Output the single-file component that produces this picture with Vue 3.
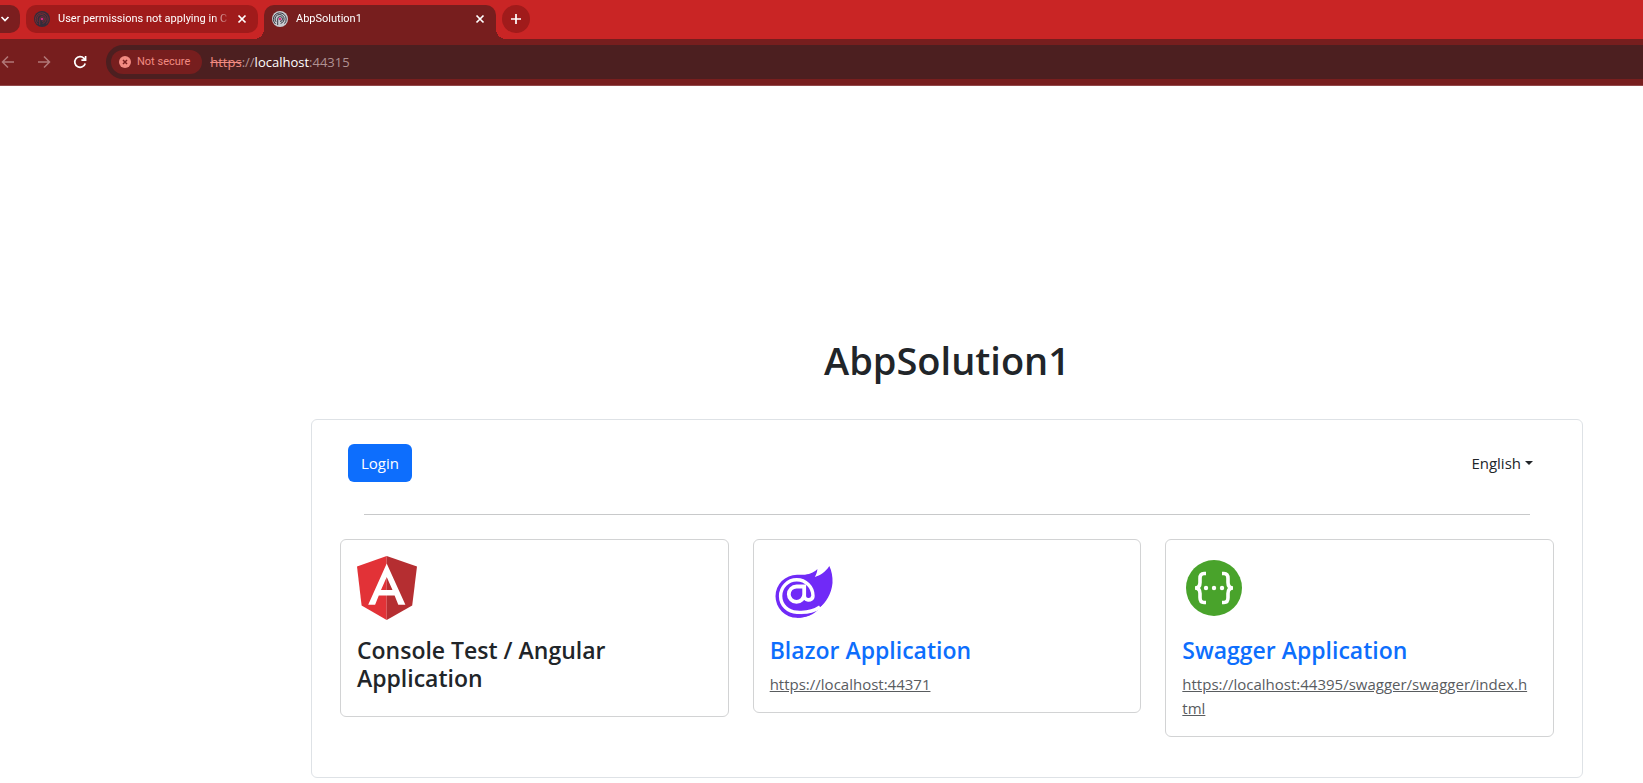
<template>
  <div class="browser">
    <header>
      <div class="tab-strip">
        <button type="button" class="tab-search" aria-label="Search tabs">
          <svg width="10" height="10" viewBox="0 0 10 10"><path d="M1.5 3 5 6.5 8.5 3" /></svg>
        </button>
        <div v-for="tab in tabs" :key="tab.title" class="tab" :class="{ active: tab.active }">
          <svg class="favicon" :class="{ light: tab.active }" viewBox="0 0 16 16">
            <circle class="disc" cx="8" cy="8" r="8" />
            <path class="rings" d="M3.5 13A6.4 6.4 0 1 1 12.5 12.6M5.7 14V8A2.4 2.4 0 1 1 8 10.4M4 10.8A4.5 4.5 0 1 1 8.6 12.4" />
            <circle class="core" cx="8" cy="8" r="1.3" />
          </svg>
          <span class="tab-title">{{ tab.title }}</span>
          <button type="button" class="tab-close" aria-label="Close tab">
            <svg width="10" height="10" viewBox="0 0 10 10"><path d="M1.5 1.5 8.5 8.5M8.5 1.5 1.5 8.5" /></svg>
          </button>
        </div>
        <button type="button" class="new-tab" aria-label="New tab">
          <svg width="12" height="12" viewBox="0 0 12 12"><path d="M6 1v10M1 6h10" /></svg>
        </button>
      </div>

      <div class="toolbar">
        <button type="button" class="nav-button dim" aria-label="Back">
          <svg width="14" height="14" viewBox="0 0 14 14"><path d="M13 7H2M7 1.5 1.5 7 7 12.5" /></svg>
        </button>
        <button type="button" class="nav-button dim" aria-label="Forward">
          <svg width="14" height="14" viewBox="0 0 14 14"><path d="M1 7h11M7 1.5 12.5 7 7 12.5" /></svg>
        </button>
        <button type="button" class="nav-button" aria-label="Reload">
          <svg width="14" height="14" viewBox="0 0 14 14"><path d="M12.2 8.4A5.3 5.3 0 1 1 11 3.4L12.6 5M12.6 1v4.2H8.4" /></svg>
        </button>
        <div class="address">
          <button type="button" class="not-secure">
            <svg width="12" height="12" viewBox="0 0 12 12">
              <circle cx="6" cy="6" r="6" />
              <path d="M4 4 8 8M8 4 4 8" />
            </svg>
            Not secure
          </button>
          <span class="url"><s>https</s>://<b>localhost</b>:44315</span>
        </div>
      </div>
    </header>

    <main class="page">
      <h1>AbpSolution1</h1>
      <section class="panel">
        <div class="panel-top">
          <button type="button" class="login">Login</button>
          <button type="button" class="language">English</button>
        </div>
        <hr />
        <div class="apps">
          <article v-for="app in apps" :key="app.name" class="app">
            <svg v-if="app.icon === 'angular'" class="logo" viewBox="0 0 64 64">
              <path fill="#e23237" d="M29.700 0 0 10.400 4.600 49.600 29.700 64z" />
              <path fill="#b52e31" d="M29.700 0 60 10.400 55.200 49.600 29.700 64z" />
              <path fill="#fff" fill-rule="evenodd" d="M29.700 7.500 11.200 48.800h6.900l3.700-9.300h15.800l3.700 9.300h7.100zM29.700 21 35.500 34H24z" />
            </svg>
            <svg v-else-if="app.icon === 'blazor'" class="logo" viewBox="0 0 64 64">
              <path fill="#702af7" d="M59.300 10C55.500 16 50 19.500 44.800 21c1.600-2.600 2.400-5.200 2.600-8C43.500 17 38.500 18.600 33 18.800H27A21.500 21.500 0 0 0 27 61.800c9.500 0 17-3.500 22.500-10C56 46.500 61.500 38 62.500 27c.3-6.500-.8-12-3.200-17z" />
              <path fill="#fff" d="M27 58.500C38 59 46 55.500 52 50L53 49l3 3-6 8z" />
              <path fill="#702af7" d="M25 58.200C36 59 44 56 49.500 52 44 59 36 61.800 27 61.800z" />
              <g fill="none" stroke="#fff">
                <path stroke-width="3.400" d="M43 40A16.200 16.200 0 1 0 27 56.200C36 57 43.500 55.500 50 51" />
                <path stroke-width="3.800" d="M34.200 30.500V39a4.400 4.400 0 0 0 8.800 1M34.200 38.200a7.700 7.700 0 1 1-7.700-7.700h7.700z" />
              </g>
            </svg>
            <svg v-else class="logo" viewBox="0 0 64 64">
              <circle cx="32" cy="32" r="28" fill="#49a32b" />
              <g fill="none" stroke="#fff" stroke-width="3.600">
                <path d="M24 17.500h-2q-4 0-4 5v4q0 5.500-5 5.500 5 0 5 5.500v4q0 5 4 5h2M40 17.500h2q4 0 4 5v4q0 5.500 5 5.500-5 0-5 5.500v4q0 5-4 5h-2" />
              </g>
              <g fill="#fff">
                <circle cx="24" cy="32" r="2.200" /><circle cx="32" cy="32" r="2.200" /><circle cx="40" cy="32" r="2.200" />
              </g>
            </svg>
            <h2 :class="{ linked: app.url }">{{ app.name }}</h2>
            <a v-if="app.url" :href="app.url">{{ app.url }}</a>
          </article>
        </div>
      </section>
    </main>
  </div>
</template>

<script setup>
const tabs = [
  { title: 'User permissions not applying in C', active: false },
  { title: 'AbpSolution1', active: true }
]

const apps = [
  { name: 'Console Test / Angular Application', icon: 'angular', url: '' },
  { name: 'Blazor Application', icon: 'blazor', url: 'https://localhost:44371' },
  { name: 'Swagger Application', icon: 'swagger', url: 'https://localhost:44395/swagger/swagger/index.html' }
]
</script>

<style>
body { background: #fff; }
</style>

<style scoped>
.browser {
  overflow: hidden;
  color: #212529;
  font: 15px/24px "Open Sans", "Noto Sans", sans-serif;
}
.browser * { box-sizing: border-box; }
button {
  padding: 0;
  border: none;
  background: none;
  color: inherit;
  font: inherit;
  cursor: pointer;
}
header svg { fill: none; stroke: currentColor; stroke-width: 1.7; }

/* tabs */
.tab-strip {
  display: flex;
  gap: 6px;
  height: 39px;
  padding-top: 5px;
  background: #c92525;
  color: #fff;
}
.tab-search {
  display: flex;
  align-items: center;
  width: 20px;
  height: 28px;
  border-radius: 0 10px 10px 0;
  background: #7b1e1f;
}
.tab {
  display: flex;
  align-items: center;
  width: 232px;
  height: 28px;
  padding: 0 11px 0 8px;
  border-radius: 10px;
  background: #a01b1b;
  font-family: Roboto, "Open Sans", sans-serif;
  font-size: 11px;
}
.tab.active {
  position: relative;
  height: 34px;
  padding-bottom: 6px;
  border-radius: 10px 10px 0 0;
  background: #771e1e;
}
.tab.active::before,
.tab.active::after {
  content: '';
  position: absolute;
  bottom: 0;
  width: 10px;
  height: 10px;
}
.tab.active::before { right: 100%; background: radial-gradient(circle at 0 0, transparent 10px, #771e1e 10px); }
.tab.active::after { left: 100%; background: radial-gradient(circle at 100% 0, transparent 10px, #771e1e 10px); }
.favicon { flex: none; width: 16px; height: 16px; }
.disc { fill: #342c3a; stroke: none; }
.favicon .rings { stroke: #762c35; stroke-width: 1; }
.core { fill: #d52b80; stroke: none; }
.light .disc { fill: #c8cbd0; }
.light .rings { stroke: #353840; }
.tab-title {
  flex: 1;
  min-width: 0;
  margin: 0 4px 0 8px;
  overflow: hidden;
  white-space: nowrap;
  mask-image: linear-gradient(90deg, #000 156px, transparent 172px);
}
.tab-close { display: flex; }
.new-tab {
  display: grid;
  place-items: center;
  width: 28px;
  height: 28px;
  border-radius: 50%;
  background: #a01b1b;
}

/* toolbar */
.toolbar {
  display: flex;
  align-items: center;
  height: 47px;
  padding-left: 1px;
  border-bottom: 1px solid #924849;
  background: #771e1e;
  color: #fff;
}
.nav-button { display: flex; width: 36px; }
.nav-button:not(.dim) { width: 33px; }
.dim { color: #b17878; }
.dim svg { stroke-width: 1.5; }
.address {
  display: flex;
  flex: 1;
  align-items: center;
  gap: 8px;
  height: 34px;
  padding-left: 5px;
  border-radius: 17px 0 0 17px;
  background: #4c1f20;
}
.not-secure {
  display: flex;
  align-items: center;
  gap: 6px;
  height: 24px;
  padding: 0 12px 0 8px;
  border-radius: 12px;
  background: #771e1e;
  color: #f28b82;
  font-family: Roboto, "Open Sans", sans-serif;
  font-size: 11px;
}
.not-secure circle { fill: #f28b82; stroke: none; }
.not-secure path { stroke: #771e1e; stroke-width: 1.5; }
.url { color: #b09192; font-size: 13px; }
.url s { color: #f28b82; }
.url b { color: #fff; font-weight: 400; }

/* page */
.page { padding: 250px 60px 4px 311px; }
h1 {
  margin: 0;
  font-size: 38px;
  font-weight: 600;
  line-height: 48px;
  text-align: center;
}
.panel {
  margin-top: 35px;
  padding: 24px 28px 40px;
  border: 1px solid #dee2e6;
  border-radius: 6px;
}
.panel-top {
  display: flex;
  justify-content: space-between;
  align-items: center;
  padding: 0 21px 0 8px;
}
.login {
  height: 38px;
  padding: 0 13px;
  border-radius: 6px;
  background: #0d6efd;
  color: #fff;
}
.language { display: flex; align-items: center; gap: 4px; }
.language::after {
  content: '';
  border: 4px solid transparent;
  border-top-color: #212529;
  border-bottom: none;
}
hr {
  height: 1px;
  margin: 32px 24px 24px;
  border: none;
  background: #c8c9ca;
}
.apps {
  display: grid;
  grid-template-columns: repeat(3, 1fr);
  align-items: start;
  gap: 24px;
}
.app {
  padding: 16px;
  border: 1px solid #d2d3d4;
  border-radius: 6px;
}
.logo { display: block; width: 64px; height: 64px; }
h2 {
  margin: 16px 0 8px;
  font-size: 23px;
  font-weight: 600;
  line-height: 28px;
}
.linked { color: #0d6efd; }
.app a {
  display: block;
  padding-right: 6px;
  color: #595c5f;
  word-break: break-all;
}
</style>
